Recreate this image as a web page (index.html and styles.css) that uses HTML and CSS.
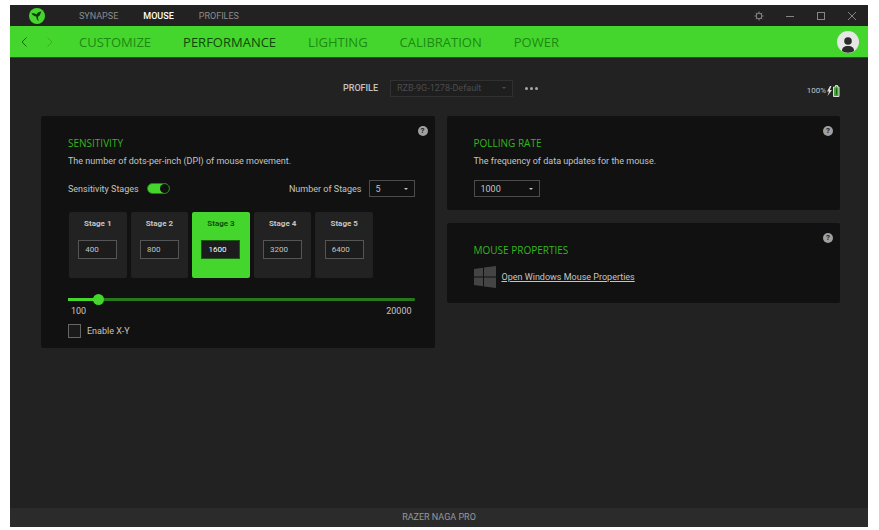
FILE: index.html
```html
<!DOCTYPE html>
<html lang="en">
<head>
    <meta charset="UTF-8">
    <meta name="viewport" content="width=device-width, initial-scale=1.0">
    <title>Razer Synapse</title>
    <link rel="stylesheet" href="styles.css">
</head>
<body>
    <div class="app">
        <header class="titlebar">
            <svg class="logo" viewBox="0 0 16 16">
                <circle cx="8" cy="8" r="8" fill="#44d62c"/>
                <path d="M2.500 5.500c1.800-.4 3.600-.1 5 .9C8.600 4.600 10.400 3.700 12.500 3.600c-.8 1.200-1 2.300-1.600 3.300-.4.8-1 1.300-1.800 1.700-.2 1.600.2 3 .6 4.400-1.500-.9-2.400-2.500-2.400-4.500C5.300 8.200 3.700 7.200 2.500 5.500z" fill="#12380c"/>
            </svg>
            <nav class="top-tabs">
                <a href="#">SYNAPSE</a>
                <a href="#" class="active">MOUSE</a>
                <a href="#">PROFILES</a>
            </nav>
            <div class="window-buttons">
                <button aria-label="Settings">
                    <svg viewBox="0 0 10 10"><circle cx="5" cy="5" r="2.800"/><path d="M5 .5v1.700M5 7.800v1.700M.5 5h1.700M7.800 5h1.700M1.800 1.800l1.200 1.200M7 7l1.200 1.200M8.200 1.800L7 3M3 7L1.800 8.200"/></svg>
                </button>
                <button aria-label="Minimize">
                    <svg viewBox="0 0 10 10"><path d="M1 5.500h8"/></svg>
                </button>
                <button aria-label="Maximize">
                    <svg viewBox="0 0 10 10"><rect x="1.500" y="1.500" width="7" height="7"/></svg>
                </button>
                <button aria-label="Close">
                    <svg viewBox="0 0 10 10"><path d="M1 1l8 8M9 1L1 9"/></svg>
                </button>
            </div>
        </header>

        <div class="navbar">
            <div class="arrows">
                <button aria-label="Back"><svg viewBox="0 0 6 10"><path d="M5.500 .5L1 5l4.500 4.500"/></svg></button>
                <button aria-label="Forward" disabled><svg viewBox="0 0 6 10"><path d="M.5 .5L5 5 .5 9.500"/></svg></button>
            </div>
            <nav class="main-tabs">
                <a href="#">CUSTOMIZE</a>
                <a href="#" class="active">PERFORMANCE</a>
                <a href="#">LIGHTING</a>
                <a href="#">CALIBRATION</a>
                <a href="#">POWER</a>
            </nav>
            <button class="avatar" aria-label="Account">
                <svg viewBox="0 0 22 22">
                    <circle cx="11" cy="11" r="11" fill="#e6e6e6"/>
                    <circle cx="11" cy="10" r="3.800" fill="#2a2a2a"/>
                    <path d="M5 20c0-3.500 2-5 6-5s6 1.500 6 5c-3.500 2.200-8.500 2.200-12 0z" fill="#2a2a2a"/>
                </svg>
            </button>
        </div>

        <main>
            <div class="profile-row">
                <div class="profile">
                    <label for="profile">PROFILE</label>
                    <span class="select profile-select">
                        <select id="profile" disabled>
                            <option>RZB-9G-1278-Default</option>
                        </select>
                    </span>
                    <button class="more" aria-label="More"><i></i><i></i><i></i></button>
                </div>
                <div class="battery">
                    <span>100%</span>
                    <svg viewBox="0 0 14 12">
                        <path d="M4 1L1 6.500h2L1.500 11 6 5H3.800L5.500 1z" fill="#ddd"/>
                        <path d="M8.500 2h1V.5h2V2h1.500v9.500H7.500V2z" fill="#44a636" stroke="#ddd"/>
                        <path d="M10.500 3.500v6" stroke="#1d5c14"/>
                    </svg>
                </div>
            </div>

            <div class="panels">
                <section class="panel">
                    <button class="help" aria-label="Help">?</button>
                    <h2>SENSITIVITY</h2>
                    <p>The number of dots-per-inch (DPI) of mouse movement.</p>
                    <div class="stage-options">
                        <label for="stagesOn">Sensitivity Stages</label>
                        <input type="checkbox" class="switch" id="stagesOn" checked>
                        <label for="stageCount" class="count-label">Number of Stages</label>
                        <span class="select count-select">
                            <select id="stageCount">
                                <option>2</option>
                                <option>3</option>
                                <option>4</option>
                                <option selected>5</option>
                            </select>
                        </span>
                    </div>
                    <div class="stages">
                        <div class="stage">
                            <label for="stage1">Stage 1</label>
                            <input type="text" id="stage1" value="400">
                        </div>
                        <div class="stage">
                            <label for="stage2">Stage 2</label>
                            <input type="text" id="stage2" value="800">
                        </div>
                        <div class="stage active">
                            <label for="stage3">Stage 3</label>
                            <input type="text" id="stage3" value="1600">
                        </div>
                        <div class="stage">
                            <label for="stage4">Stage 4</label>
                            <input type="text" id="stage4" value="3200">
                        </div>
                        <div class="stage">
                            <label for="stage5">Stage 5</label>
                            <input type="text" id="stage5" value="6400">
                        </div>
                    </div>
                    <input type="range" class="slider" aria-label="DPI" min="100" max="20000" step="50" value="1600">
                    <div class="slider-labels">
                        <span>100</span>
                        <span>20000</span>
                    </div>
                    <div class="xy">
                        <input type="checkbox" class="check" id="xy">
                        <label for="xy">Enable X-Y</label>
                    </div>
                </section>

                <div class="column">
                    <section class="panel">
                        <button class="help" aria-label="Help">?</button>
                        <h2>POLLING RATE</h2>
                        <p>The frequency of data updates for the mouse.</p>
                        <span class="select rate-select">
                            <select aria-label="Polling rate">
                                <option>125</option>
                                <option>500</option>
                                <option selected>1000</option>
                            </select>
                        </span>
                    </section>
                    <section class="panel">
                        <button class="help" aria-label="Help">?</button>
                        <h2>MOUSE PROPERTIES</h2>
                        <div class="properties">
                            <svg viewBox="0 0 22 22"><path d="M0 3l9-1.300V10.500H0zM10 1.500L22 0v10.500H10zM0 11.500h9v8.800L0 19zM10 11.500h12V22l-12-1.600z"/></svg>
                            <a href="#">Open Windows Mouse Properties</a>
                        </div>
                    </section>
                </div>
            </div>
        </main>

        <footer>RAZER NAGA PRO</footer>
    </div>
</body>
</html>
```
FILE: styles.css
```css
* {
    box-sizing: border-box;
}
body {
    margin: 0;
    padding: 5px 11px 3px 10px;
    background: #fff;
    color: #c4c4c4;
    font-family: Roboto, "Liberation Sans", sans-serif;
    font-size: 9px;
    line-height: 12px;
}
button, input, select {
    margin: 0;
    padding: 0;
    border: none;
    background: none;
    color: inherit;
    font: inherit;
    appearance: none;
}
button {
    cursor: pointer;
}
a {
    color: inherit;
    text-decoration: none;
}
svg {
    display: block;
}
.app {
    display: flex;
    flex-direction: column;
    min-height: calc(100vh - 8px);
    background: #222;
}

/* title bar */
.titlebar {
    display: flex;
    align-items: center;
    height: 21px;
    padding: 0 11px 0 19px;
}
.logo {
    width: 16px;
    height: 16px;
}
.top-tabs {
    display: flex;
    gap: 25px;
    margin-left: 34px;
    color: #8c8c8c;
}
.top-tabs .active {
    color: #fff;
    font-weight: 500;
}
.window-buttons {
    display: flex;
    gap: 21px;
    margin-left: auto;
}
.window-buttons svg {
    width: 10px;
    height: 10px;
    fill: none;
    stroke: #858585;
}

/* green bar */
.navbar {
    display: flex;
    align-items: center;
    height: 32px;
    padding: 1px 9px 0 11px;
    background: #44d62c;
    border-bottom: 1px solid #1b5c12;
}
.arrows {
    display: flex;
    gap: 20px;
}
.arrows svg {
    width: 6px;
    height: 10px;
    fill: none;
    stroke: #14660c;
}
.arrows button:disabled {
    opacity: 0.3;
}
.main-tabs {
    display: flex;
    gap: 32px;
    margin-left: 26px;
    font-family: "Open Sans", sans-serif;
    font-size: 13px;
    line-height: 16px;
    color: #1c8a12;
}
.main-tabs .active {
    color: #0c4a08;
}
.avatar {
    margin-left: auto;
}
.avatar svg {
    width: 22px;
    height: 22px;
}

/* profile */
main {
    flex: 1;
    padding: 20px 28px 20px 31px;
}
.profile-row {
    display: grid;
    grid-template-columns: 1fr auto 1fr;
    align-items: center;
    height: 20px;
    margin-bottom: 18px;
}
.profile {
    display: flex;
    grid-column: 2;
    align-items: center;
    gap: 12px;
}
.profile label {
    font-weight: 500;
}
.more {
    display: flex;
    gap: 2px;
}
.more i {
    width: 3px;
    height: 3px;
    border-radius: 50%;
    background: #a8a8a8;
}
.battery {
    display: flex;
    align-items: center;
    justify-self: end;
    padding-top: 5px;
    font-size: 8px;
}
.battery svg {
    width: 14px;
    height: 12px;
}

/* drop-downs */
.select {
    position: relative;
    display: inline-block;
}
.select::after {
    content: "";
    position: absolute;
    top: 50%;
    right: 7px;
    margin-top: -1px;
    border: 2px solid transparent;
    border-top-color: #c4c4c4;
    pointer-events: none;
}
.select select {
    display: block;
    width: 100%;
    height: 17px;
    padding-left: 6px;
    border: 1px solid #4c4c4c;
}
.profile-select {
    width: 123px;
    color: #4c4c4c;
}
.profile-select select {
    border-color: #303030;
    background: #1e1e1e;
    opacity: 1;
}
.profile-select::after {
    border-top-color: #4c4c4c;
}
.count-select {
    width: 46px;
}
.rate-select {
    display: block;
    width: 66px;
    margin-bottom: 3px;
}

/* panels */
.panels {
    display: grid;
    grid-template-columns: 1fr 1fr;
    align-items: start;
    gap: 12px;
}
.column {
    display: grid;
    gap: 13px;
}
.panel {
    position: relative;
    padding: 20px 20px 10px 27px;
    background: #111;
    border-radius: 2px;
}
.help {
    position: absolute;
    top: 10px;
    right: 7px;
    width: 10px;
    height: 10px;
    border-radius: 50%;
    background: #a0a0a0;
    color: #222;
    font-size: 8px;
    font-weight: bold;
    line-height: 10px;
}
h2 {
    margin: 0 0 4px;
    color: #35b520;
    font-family: "Open Sans", sans-serif;
    font-size: 10px;
    font-weight: normal;
    line-height: 14px;
}
p {
    margin: 0 0 12px;
    line-height: 14px;
}
.stage-options {
    display: flex;
    align-items: center;
}
.count-label {
    margin: 0 7px 0 auto;
}
.switch {
    width: 23px;
    height: 11px;
    margin-left: 8px;
    padding: 1px;
    border: 1px solid #777;
    border-radius: 6px;
}
.switch::before {
    content: "";
    display: block;
    width: 9px;
    height: 9px;
    border-radius: 50%;
    background: #777;
}
.switch:checked {
    padding: 0;
    border-color: #2a7a1e;
    background: #44d62c;
}
.switch:checked::before {
    margin-left: auto;
    background: #111;
}
.stages {
    display: grid;
    grid-template-columns: repeat(5, 1fr);
    gap: 4px;
    width: 304px;
    max-width: 100%;
    margin: 15px 0 16px 1px;
}
.stage {
    display: flex;
    flex-direction: column;
    align-items: center;
    gap: 10px;
    height: 66px;
    padding-top: 6px;
    border-radius: 2px;
    background: #222;
    font-size: 8px;
}
.stage label {
    font-weight: bold;
}
.stage input {
    width: 39px;
    height: 19px;
    padding-left: 6px;
    border: 1px solid #555;
    background: #1c1c1c;
}
.stage.active {
    background: #44d62c;
}
.stage.active label {
    color: #0f5209;
}
.stage.active input {
    border-color: #1c5c12;
    color: #fff;
}

/* slider */
.slider {
    display: block;
    width: 100%;
    height: 11px;
    background: linear-gradient(to right, #44d62c 9%, #267a1b 9%) center / 100% 3px no-repeat;
}
.slider::-webkit-slider-thumb {
    appearance: none;
    width: 11px;
    height: 11px;
    border-radius: 50%;
    background: #44d62c;
}
.slider-labels {
    display: flex;
    justify-content: space-between;
    padding: 0 3px;
}
.xy {
    display: flex;
    align-items: center;
    gap: 6px;
    margin-top: 7px;
}
.check {
    width: 13px;
    height: 14px;
    border: 1px solid #666;
    background: #1a1a1a;
}
.check:checked {
    background: #44d62c;
}

.properties {
    display: flex;
    align-items: center;
    gap: 6px;
    padding: 5px 0;
}
.properties svg {
    width: 22px;
    height: 22px;
    fill: #444;
}
.properties a {
    text-decoration: underline;
}

footer {
    height: 19px;
    background: #2b2b2b;
    color: #999;
    line-height: 19px;
    text-align: center;
}
```
